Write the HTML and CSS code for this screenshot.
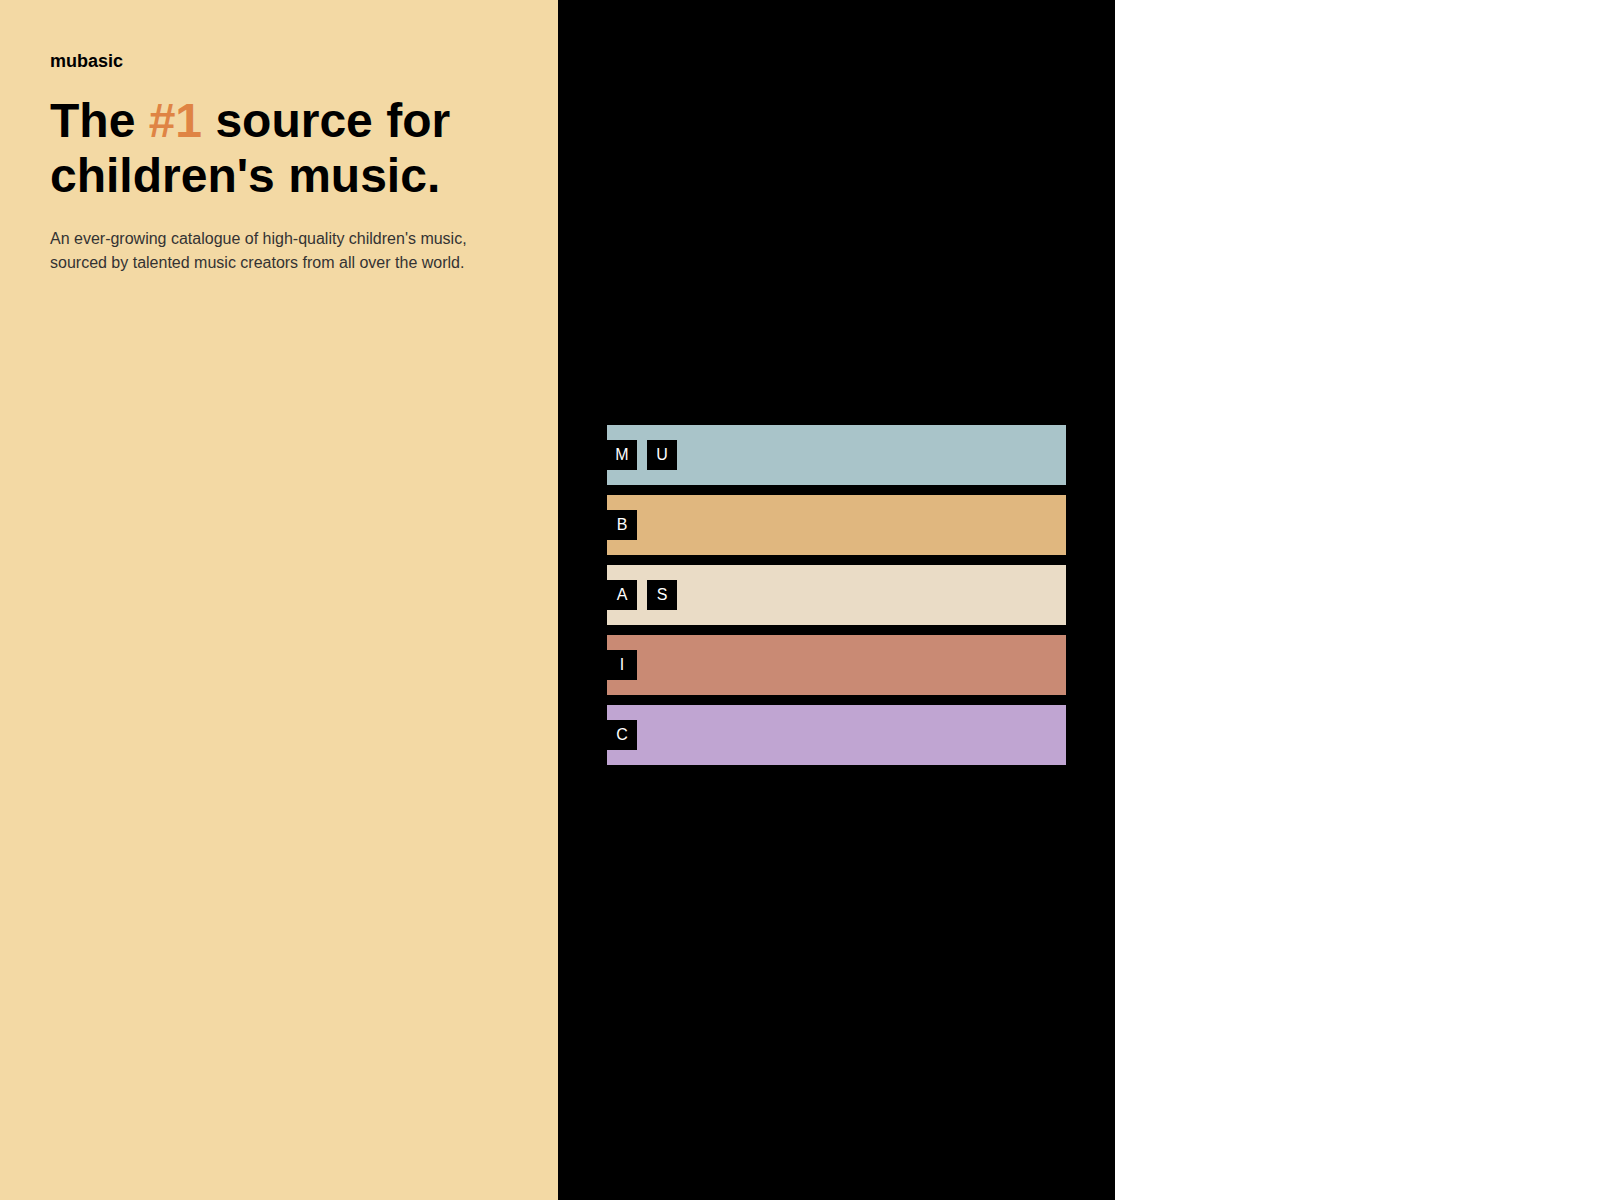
FILE: index.html
```html
<!DOCTYPE html>
<html lang="en">
<head>
<meta charset="utf-8">
<title>mubasic</title>
<link rel="stylesheet" href="styles.css">
</head>
<body>
<div class="page">
  <section class="intro">
    <div class="brand">mubasic</div>
    <h1 class="headline">The <span class="accent">#1</span> source for children's music.</h1>
    <p class="lead">An ever-growing catalogue of high-quality children's music, sourced by talented music creators from all over the world.</p>
  </section>
  <section class="stage">
    <div class="bars">
      <div class="bar bar-blue"><span class="tile">M</span><span class="tile">U</span></div>
      <div class="bar bar-orange"><span class="tile">B</span></div>
      <div class="bar bar-cream"><span class="tile">A</span><span class="tile">S</span></div>
      <div class="bar bar-terra"><span class="tile">I</span></div>
      <div class="bar bar-purple"><span class="tile">C</span></div>
    </div>
  </section>
  <section class="blank"></section>
</div>
</body>
</html>
```

FILE: styles.css
```css
html, body {
  margin: 0;
  padding: 0;
  height: 100%;
}

body {
  font-family: "Liberation Sans", Arial, sans-serif;
  background: #ffffff;
}

.page {
  display: grid;
  grid-template-columns: 557.5px 557.5px 1fr;
  height: 100vh;
}

.intro {
  background: #f3d9a4;
  padding: 51px 50px 50px;
}

.brand {
  font-size: 18px;
  font-weight: 700;
  color: #000;
}

.headline {
  margin: 21px 0 0;
  font-size: 48px;
  line-height: 1.15;
  font-weight: 700;
  color: #000;
}

.accent {
  color: #df8444;
}

.lead {
  margin: 24px 0 0;
  font-size: 16px;
  line-height: 24px;
  color: #333;
}

.stage {
  background: #000;
  display: flex;
  flex-direction: column;
  justify-content: center;
  padding: 0 49.5px;
}

.bars {
  display: flex;
  flex-direction: column;
}

.bar {
  height: 60px;
  margin-bottom: 10px;
  display: flex;
  align-items: center;
  gap: 10px;
}

.bar-blue { background: #a9c4c9; }
.bar-orange { background: #e0b77f; }
.bar-cream { background: #eadcc6; }
.bar-terra { background: #c98a74; }
.bar-purple { background: #c0a5d2; }

.tile {
  width: 30px;
  height: 30px;
  background: #000;
  color: #fff;
  font-size: 16px;
  display: flex;
  align-items: center;
  justify-content: center;
}

.blank {
  background: #fff;
}
```
